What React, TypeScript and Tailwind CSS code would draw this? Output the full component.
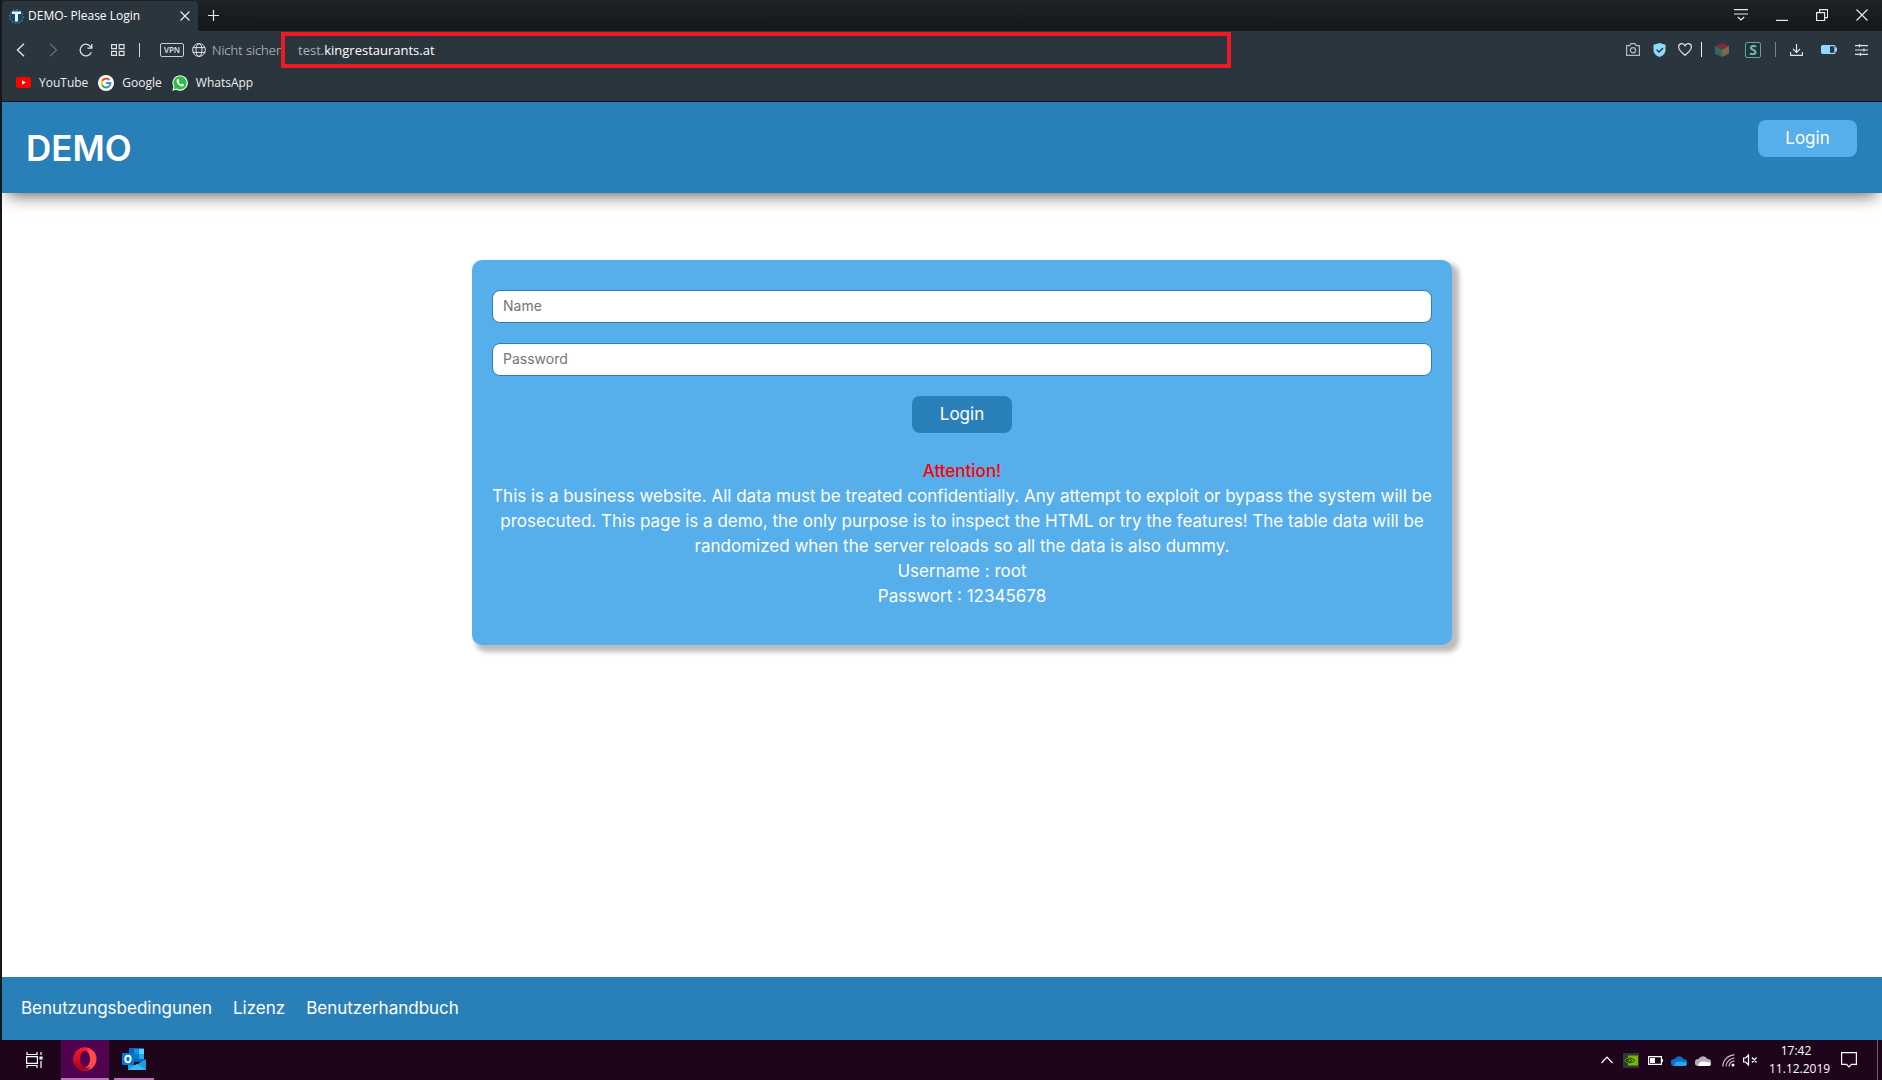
import React from "react";

type IconProps = { w: number; h: number; box?: string; className?: string; children: React.ReactNode };

function Icon({ w, h, box, className = "", children }: IconProps) {
  return (
    <svg
      width={w}
      height={h}
      viewBox={box ?? `0 0 ${w} ${h}`}
      fill="none"
      stroke="currentColor"
      strokeWidth="1.2"
      className={`shrink-0 ${className}`}
      aria-hidden="true"
    >
      {children}
    </svg>
  );
}

function TabStrip() {
  return (
    <div className="flex h-[31px] items-stretch bg-linear-to-b from-[#1e2125] to-[#15181b] text-[#e8eaec]">
      <div className="mt-px flex w-[196px] items-center rounded-t-sm bg-[#2b353d] pl-[7px] pr-2">
        <Icon w={15} h={15}>
          <circle cx="7.5" cy="7.5" r="6.800" fill="#17486b" stroke="#2b7ba5" strokeDasharray="2 1.5" />
          <path d="M3 2.500h9v2.500H9V12.500H6V5H3z" fill="#eef6fb" stroke="none" />
        </Icon>
        <span className="ml-1 whitespace-nowrap text-[12px] leading-4 text-white">DEMO- Please Login</span>
        <button aria-label="Close tab" className="ml-auto">
          <Icon w={10} h={10}><path d="M.5.5l9 9M9.5.5l-9 9" /></Icon>
        </button>
      </div>
      <button aria-label="New tab" className="ml-2.5 flex items-center">
        <Icon w={11} h={11}><path d="M5.500 0v11M0 5.500h11" /></Icon>
      </button>
      <div className="ml-auto flex items-center gap-7 pb-px pr-3.5">
        <button aria-label="Tab menu">
          <Icon w={14} h={12}><path d="M0 .6h14M0 5h14M3.800 8L7 11l3.200-3" /></Icon>
        </button>
        <button aria-label="Minimize">
          <Icon w={12} h={12}><path d="M0 11.400h12" /></Icon>
        </button>
        <button aria-label="Restore">
          <Icon w={12} h={12}><path d="M.6 3.600h8v8h-8zM3.600 3.600v-3h8v8h-3" /></Icon>
        </button>
        <button aria-label="Close window">
          <Icon w={12} h={12}><path d="M.5.5l11 11M11.500.5l-11 11" /></Icon>
        </button>
      </div>
    </div>
  );
}

function Toolbar() {
  return (
    <div className="flex h-[37px] items-center bg-[#2b353d] px-3.5 text-[#dfe3e6]">
      <div className="flex shrink-0 items-center">
        <button aria-label="Back"><Icon w={9} h={14}><path d="M8 .8L1.500 7 8 13.200" strokeWidth="1.4" /></Icon></button>
        <button aria-label="Forward" className="ml-6 text-[#66717a]"><Icon w={9} h={14}><path d="M1 .8L7.500 7 1 13.200" strokeWidth="1.2" /></Icon></button>
        <button aria-label="Reload" className="ml-[21px]">
          <Icon w={14} h={14}><path d="M12.300 9.200A5.800 5.800 0 1 1 12 4.200M12.800 1v4.200H8.500" strokeWidth="1.3" /></Icon>
        </button>
        <button aria-label="Speed dial" className="ml-[18px]">
          <Icon w={14} h={12}><path d="M.6.6h4.800v4H.6zM8.200.6H13v4H8.200zM.6 7.400h4.800v4H.6zM8.200 7.400H13v4H8.200z" /></Icon>
        </button>
        <span className="ml-3.5 h-3.5 w-px bg-[#cfd4d8]" />
        <button className="ml-5 h-3.5 w-6 rounded-[2px] border border-[#c9ced2] text-center text-[8px] font-semibold leading-3">VPN</button>
        <Icon w={14} h={14} className="ml-2">
          <g strokeWidth="1">
            <circle cx="7" cy="7" r="6.400" />
            <ellipse cx="7" cy="7" rx="3" ry="6.400" />
            <path d="M1 4.600h12M1 9.400h12" />
          </g>
        </Icon>
        <span className="ml-1.5 w-[69px] whitespace-nowrap text-[13px] font-light leading-4 text-[#d3d8db]">Nicht sicher</span>
      </div>
      <label className="mt-px flex h-9 w-[950px] min-w-0 items-center border-4 border-[#ed1c24] pl-[13px] text-[13px] leading-4 text-[#a9b2b9]">
        <span>test.</span><span className="text-white">kingrestaurants.at</span>
        <input aria-label="Address" className="min-w-0 flex-1 bg-transparent outline-none" />
      </label>
      <div className="ml-auto flex shrink-0 items-center">
        <Icon w={14} h={13} className="text-[#b4bbc0]"><path d="M.6 2.600h3.200l1.200-2h4l1.200 2h3.200v9.800H.6z" /><circle cx="7" cy="7.300" r="2.600" /></Icon>
        <Icon w={13} h={14} className="ml-[13px]"><path d="M6.500 0l6 1.800v5.500q0 4.500-6 6.700-6-2.200-6-6.700V1.800z" fill="#8fd9ff" stroke="none" /><path d="M3.600 6.800L6 9l4-4" stroke="#2b353d" strokeWidth="1.500" /></Icon>
        <Icon w={14} h={13} className="ml-3"><path d="M7 12.300Q.6 7.300.6 4.100C.6.200 5.500-.6 7 2.800 8.500-.6 13.400.2 13.400 4.100 13.400 7.300 7 12.300 7 12.300z" /></Icon>
        <span className="ml-[9px] h-[15px] w-px bg-[#eceff1]" />
        <Icon w={14} h={14} className="ml-[13px]"><g stroke="none"><path d="M7 0l7 3-7 3.500L0 3z" fill="#7d2c3c" /><path d="M0 3l7 3.500V14l-7-3.200z" fill="#35695f" /><path d="M14 3L7 6.500V14l7-3.200z" fill="#7a6a4a" /></g></Icon>
        <span className="ml-4 flex h-4 w-4 items-center justify-center rounded-[2px] border border-[#6ba098] bg-[#1b3838] text-[14px] font-bold leading-none text-[#83b2ac]">S</span>
        <span className="ml-3.5 h-[15px] w-px bg-[#7a848b]" />
        <button aria-label="Downloads" className="ml-3.5"><Icon w={13} h={12}><path d="M6.500 0v8M3 5l3.500 3.400L10 5M.6 8v3.400h11.800V8" /></Icon></button>
        <Icon w={16} h={9} className="ml-[18px] text-[#8fd9ff]"><rect x=".6" y=".6" width="13.300" height="7.800" rx="1" /><path d="M1 1h8v7H1zM14 2.500h2v4h-2z" fill="currentColor" stroke="none" /></Icon>
        <button aria-label="Easy setup" className="ml-[18px]"><Icon w={13} h={12}><path d="M0 1.600h13M0 6h13M0 10.400h13M4.500 0v3.200M9 4.400v3.200M5.500 8.800V12" /></Icon></button>
      </div>
    </div>
  );
}

function Bookmarks() {
  return (
    <nav className="flex h-[34px] items-center gap-2.5 border-b border-[#12161a] bg-[#2b353d] pb-1 pl-3.5 text-[12px] leading-4 text-[#eceeef]">
      <a href="#youtube" className="flex items-center gap-2">
        <Icon w={15} h={11}><rect width="15" height="11" rx="2.500" fill="#f00" stroke="none" /><path d="M6 3.200v4.600l3.800-2.300z" fill="#fff" stroke="none" /></Icon>
        YouTube
      </a>
      <a href="#google" className="flex items-center gap-2">
        <Icon w={16} h={16}>
          <circle cx="8" cy="8" r="8" fill="#fff" stroke="none" />
          <g strokeWidth="2">
            <path d="M4.200 5.800A4.400 4.400 0 0 1 11.200 5" stroke="#ea4335" />
            <path d="M4.200 5.800a4.400 4.400 0 0 0 0 4.400" stroke="#fbbc05" />
            <path d="M4.200 10.200a4.400 4.400 0 0 0 6.800 1.100" stroke="#34a853" />
            <path d="M11 11.300A4.400 4.400 0 0 0 12.400 8H8" stroke="#4285f4" />
          </g>
        </Icon>
        Google
      </a>
      <a href="#whatsapp" className="flex items-center gap-2">
        <Icon w={16} h={16}>
          <path d="M.3 15.700l1.100-4A7.700 7.700 0 1 1 4.400 14.700z" fill="#fff" stroke="none" />
          <path d="M1.700 14.300l.8-2.800A6.600 6.600 0 1 1 4.700 13.600z" fill="#25c13f" stroke="none" />
          <path d="M5.400 3.900l1-.1 1 2.200-.8 1.100q.8 1.600 2.500 2.400l1-1 2 1q-.2 2-2 2.100Q6 11 4.500 6.600 4.400 5 5.400 3.900z" fill="#fff" stroke="none" />
        </Icon>
        WhatsApp
      </a>
    </nav>
  );
}

function LoginCard() {
  const field =
    "h-[33px] w-full rounded-lg border border-[#2980b9] bg-white px-2.5 pb-0.5 text-[14px] leading-5 text-gray-700 placeholder:text-[#757575] outline-none";
  return (
    <form
      onSubmit={(e) => e.preventDefault()}
      className="flex w-full max-w-[980px] flex-col items-center gap-5 rounded-[10px] bg-[#56aeeb] px-5 pt-[30px] pb-9 shadow-[5px_5px_5px_2px_#bbbbbb]"
    >
      <input aria-label="Name" placeholder="Name" className={field} />
      <input aria-label="Password" type="password" placeholder="Password" className={field} />
      <button className="h-[37px] w-[100px] rounded-lg bg-[#2980b9] pb-0.5 text-[17px] leading-6 text-white">Login</button>
      <div className="pt-1.5 text-center text-[17px] leading-[25px] text-white">
        <p className="font-medium text-[#ff0000]">Attention!</p>
        <p>
          This is a business website. All data must be treated confidentially. Any attempt to exploit or bypass the system will be
          prosecuted. This page is a demo, the only purpose is to inspect the HTML or try the features! The table data will be
          randomized when the server reloads so all the data is also dummy.
        </p>
        <p>Username : root</p>
        <p>Passwort : 12345678</p>
      </div>
    </form>
  );
}

function Taskbar() {
  return (
    <div className="flex h-10 items-stretch bg-[#1e051c] text-white">
      <button aria-label="Task view" className="flex w-[61px] items-center justify-center pl-2">
        <Icon w={17} h={16}><path d="M1 0v2.500h10V0M.6 4.600h10.800v6.800H.6zM1 16v-2.500h10V16M15 0v3M15 9v7" /><path d="M13.500 4.500h3v3h-3z" fill="#fff" stroke="none" /></Icon>
      </button>
      <button aria-label="Opera" className="flex w-12 items-center justify-center border-b-2 border-[#b776b5] bg-[#51034f]">
        <Icon w={24} h={24}>
          <defs><linearGradient id="op" x1="0" y1="0" x2="0" y2="1"><stop stopColor="#ff1b2d" /><stop offset="1" stopColor="#a70014" /></linearGradient></defs>
          <ellipse cx="12" cy="12" rx="11.500" ry="11.500" fill="#ff4b4b" stroke="none" />
          <path d="M12 .5A11.500 11.500 0 1 0 12 23.500Q16 23 17 20 13 22 10 19 7.300 16 7.300 12T10 5q3-3 7-1Q15 1 12 .5z" fill="url(#op)" stroke="none" />
          <ellipse cx="12" cy="12" rx="5" ry="8.300" fill="#51034f" stroke="none" />
        </Icon>
      </button>
      <button aria-label="Outlook" className="ml-[5px] flex w-10 items-center justify-center border-b-2 border-[#b776b5]">
        <Icon w={24} h={22}>
          <g stroke="none">
            <path d="M7 0h15v14H7z" fill="#0f62b5" />
            <path d="M12 1h5v5h-5z" fill="#1a8fe0" /><path d="M17 1h5v5h-5z" fill="#50d9ff" /><path d="M17 6h5v5h-5z" fill="#28a8ea" /><path d="M12 6h5v5h-5z" fill="#0078d4" />
            <path d="M24 11v11H6v-6l8 1z" fill="#1b9de2" /><path d="M6 22l9-6 9 6z" fill="#44b5ee" />
            <rect y="5" width="12" height="12" rx="1" fill="#0078d4" />
          </g>
          <ellipse cx="6" cy="11" rx="2.700" ry="3.200" stroke="#fff" strokeWidth="1.900" />
        </Icon>
      </button>
      <div className="ml-auto flex items-center">
        <Icon w={12} h={8}><path d="M.5 7L6 1.200 11.500 7" /></Icon>
        <Icon w={16} h={15} className="ml-2.5">
          <path d="M0 0h16v15H0z" fill="#30343c" stroke="none" /><path d="M5 2.500h10v10H5z" fill="#76b900" stroke="none" />
          <path d="M1.500 7.500Q6 2.500 12 7.500 7 12 1.500 7.500zM4 7.500q2.500-2.500 5 0-2.500 2.300-5 0z" stroke="#28420c" strokeWidth="1" /><path d="M1.500 7.500Q3 5.500 5 5M1.500 7.500Q3 9.700 5 10" stroke="#76b900" strokeWidth=".8" />
        </Icon>
        <Icon w={15} h={9} className="ml-[9px]"><path d="M.6.6h12.800v7.800H.6z" /><path d="M2 2h5v5H2zM13.500 3H15v3h-1.500z" fill="#fff" stroke="none" /></Icon>
        <Icon w={16} h={11} className="ml-2"><path d="M3 11a3.500 3.500 0 0 1 .5-7A5 5 0 0 1 12.500 4a3.500 3.500 0 0 1 .5 7z" fill="#0f6cc9" stroke="none" /><path d="M3 11Q4 6 8 6.500l7 1Q17 11 13 11z" fill="#28a4ea" stroke="none" /></Icon>
        <Icon w={16} h={11} className="ml-2"><path d="M3 11a3.500 3.500 0 0 1 .5-7A5 5 0 0 1 12.500 4a3.500 3.500 0 0 1 .5 7z" fill="#b5adb7" stroke="none" /><path d="M3 11Q4 6 8 6.500l7 1Q17 11 13 11z" fill="#fff" stroke="none" /></Icon>
        <Icon w={13} h={13} className="ml-[11px]"><path d="M.8 12.500A12 12 0 0 1 12.500.8M4 12.500A9 9 0 0 1 12.500 4M7 12.500A6 6 0 0 1 12.500 7" stroke="#c9bfc9" /><circle cx="11" cy="11" r="1.500" fill="#fff" stroke="none" /></Icon>
        <Icon w={15} h={12} className="ml-2"><path d="M.6 4h2L5.500 1v10L2.600 8h-2zM9 3.500l4.500 5M13.500 3.500L9 8.500" /></Icon>
        <div className="ml-[11px] w-[54px] whitespace-nowrap text-center text-[12px] leading-[18px]">
          <div>17:42</div>
          <div>11.12.2019</div>
        </div>
        <button aria-label="Notifications" className="ml-[18px]"><Icon w={16} h={16}><path d="M.6.600h14.800v11.800h-4.900L8 15 5.500 12.400H.6z" /></Icon></button>
        <span className="ml-5 mr-1 h-10 w-px bg-[#6e5b6d]" />
      </div>
    </div>
  );
}

export default function App() {
  return (
    <div className="flex min-h-screen flex-col font-['Open_Sans','Noto_Sans',sans-serif]">
      <div className="flex flex-1 flex-col border-l-2 border-[#15191d] bg-white">
        <TabStrip />
        <Toolbar />
        <Bookmarks />
        <div className="flex flex-1 flex-col font-['Inter','Open_Sans',sans-serif]">
          <header className="flex h-[91px] items-start justify-between bg-[#2980b9] pl-6 pr-[25px] pt-[18px] text-white shadow-[0_8px_16px_-6px_rgba(0,0,0,0.65)]">
            <h1 className="pt-1 text-[35px] font-semibold leading-[48px]">DEMO</h1>
            <button className="h-[37px] w-[99px] rounded-lg bg-[#56aeeb] pb-0.5 text-[17px] leading-6">Login</button>
          </header>
          <main className="flex flex-1 flex-col items-center pl-10 pt-[67px]">
            <LoginCard />
          </main>
          <footer className="flex h-[63px] items-center gap-[21px] bg-[#2980b9] px-[19px] pb-0.5 text-[17px] leading-6 text-white">
            <a href="#terms">Benutzungsbedingunen</a>
            <a href="#license">Lizenz</a>
            <a href="#manual">Benutzerhandbuch</a>
          </footer>
        </div>
      </div>
      <Taskbar />
    </div>
  );
}
